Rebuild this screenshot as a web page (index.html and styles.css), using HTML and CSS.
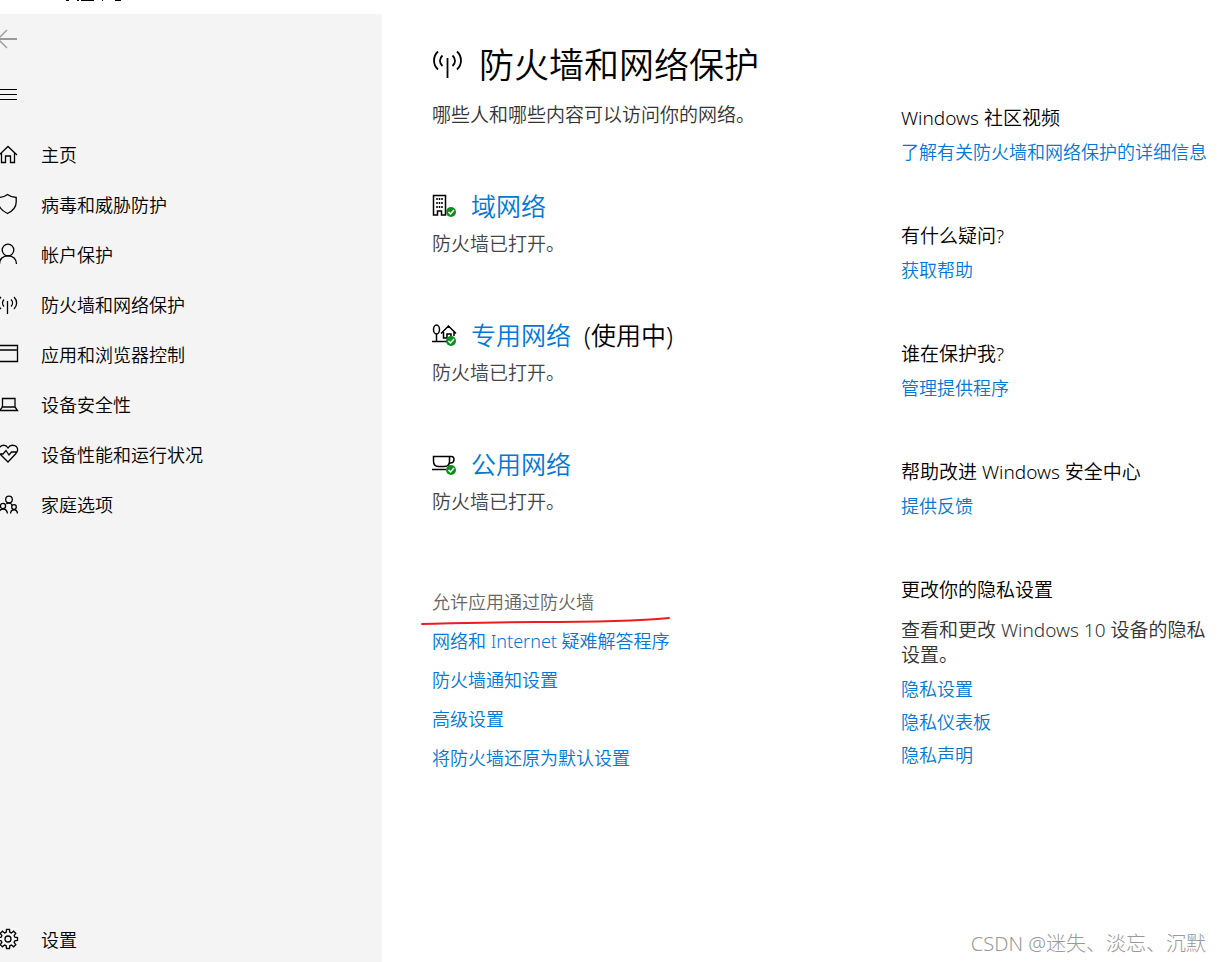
FILE: index.html
```html
<!DOCTYPE html>
<html lang="zh-CN">
<head>
<meta charset="utf-8">
<meta name="viewport" content="width=device-width, initial-scale=1">
<title>防火墙和网络保护</title>
<link rel="stylesheet" href="styles.css">
</head>
<body>
<div class="window">
  <header class="titlebar">
    <svg class="titlebar-marks" width="60" height="2" viewBox="0 0 60 2" aria-hidden="true"><path d="M0 .5h3M11 .5h2M15 .5h13M36 .5h1M49 .5h6"/></svg>
  </header>
  <div class="layout">
    <aside class="sidebar">
      <button class="icon-button back" type="button" aria-label="返回">
        <svg class="icon" viewBox="0 0 20 24"><path d="M0 11h17" stroke-width="2"/><path d="M7 2-2 11l9 9"/></svg>
      </button>
      <button class="icon-button menu" type="button" aria-label="菜单">
        <svg class="icon" viewBox="0 0 20 24"><path d="M0 7.500h17M0 12.500h17M0 17.500h17"/></svg>
      </button>
      <nav class="nav">
        <a class="nav-item" href="#"><svg class="icon" viewBox="0 0 20 24"><path d="M-1 12 8 3.500l9 8.500M1.500 10v9.500h4V13h5v6.500h4V10"/></svg>主页</a>
        <a class="nav-item" href="#"><svg class="icon" viewBox="0 0 20 24"><path d="M7.500 1.500C4.500 3.800 2 4.500-1.500 4.500V9c0 5 4 9 9 11.500 5-2.500 8.700-6.500 8.700-11.500V4.500C13 4.500 10.500 3.800 7.500 1.500z"/></svg>病毒和威胁防护</a>
        <a class="nav-item" href="#"><svg class="icon" viewBox="0 0 20 24"><circle cx="8" cy="7" r="5.800"/><path d="M-.5 21c0-5 3.500-8.200 8.500-8.200s8.500 3.200 8.500 8.200"/></svg>帐户保护</a>
        <a class="nav-item" href="#"><svg class="icon" viewBox="0 0 20 24"><path d="M7.500 8v13M4 6.500c-2 2-2 5 0 7M11 6.500c2 2 2 5 0 7M1 4c-3.500 3.500-3.500 8.500 0 12M14 4c3.500 3.500 3.500 8.500 0 12"/></svg>防火墙和网络保护</a>
        <a class="nav-item" href="#"><svg class="icon" viewBox="0 0 20 24"><path d="M-1 2.500h18.500v16H-1M-1 7h18"/></svg>应用和浏览器控制</a>
        <a class="nav-item" href="#"><svg class="icon" viewBox="0 0 20 24"><path d="M2.500 14V5.500h12.500V14l2.500 3.500H-.5zM1.500 14h14"/></svg>设备安全性</a>
        <a class="nav-item" href="#"><svg class="icon" viewBox="0 0 20 24"><path d="M-1 9C-2.500 2.500 5 0 8 5c3-5 12-2.500 9 4l-1.500 2L8 19 0 11h3l3-3.500L9 12l2.500-3h5"/></svg>设备性能和运行状况</a>
        <a class="nav-item" href="#"><svg class="icon" viewBox="0 0 20 24"><circle cx="9" cy="6.500" r="3.300"/><circle cx="3" cy="13" r="2.600"/><circle cx="14" cy="14" r="2.300"/><path d="M-1.500 20.500c1-6 8-6 9 0M10.500 20.500c.6-5 6.400-5 7 0M6.500 11c1-1.500 5-1.500 5.500 1.500"/></svg>家庭选项</a>
      </nav>
      <a class="nav-item nav-settings" href="#"><svg class="icon" viewBox="0 0 20 24"><circle cx="8" cy="11" r="3"/><path d="m6.200 4.200.3-2.700h3l.3 2.700 1.600.7 2.200-1.700 2.200 2.200-1.700 2.200.7 1.600 2.700.3v3l-2.700.3-.7 1.600 1.700 2.200-2.200 2.200-2.200-1.700-1.600.7-.3 2.700h-3l-.3-2.700-1.600-.7-2.200 1.700L.2 16.600l1.700-2.200-.7-1.600-2.700-.3v-3l2.700-.3.700-1.600L.2 5.400l2.200-2.200 2.200 1.700z"/></svg>设置</a>
    </aside>

    <main class="main">
      <h1 class="page-title">
        <svg class="title-icon" viewBox="0 0 32 32" aria-hidden="true"><path d="M15.500 9v20M10.500 6.500c-3.400 3-3.400 7.500 0 10.500M20.500 6.500c3.400 3 3.400 7.500 0 10.500M6 2.500c-5.300 5-5.300 13 0 18M25 2.500c5.300 5 5.300 13 0 18"/></svg>
        防火墙和网络保护
      </h1>
      <p class="subtitle">哪些人和哪些内容可以访问你的网络。</p>

      <section class="network">
        <h2 class="network-title">
          <svg class="network-icon" viewBox="0 0 26 26" aria-hidden="true"><path d="M1.500 22V2.500h12V22h-4v-4h-4v4z"/><path d="M5 5v10M7.500 5v10M10 5v10" stroke-dasharray="2 2"/><circle class="ok" cx="19" cy="19" r="5"/><path class="tick" d="m16.500 19 2 2 3.500-4"/></svg>
          <a class="link" href="#">域网络</a>
        </h2>
        <p class="status">防火墙已打开。</p>
      </section>
      <section class="network">
        <h2 class="network-title">
          <svg class="network-icon" viewBox="0 0 26 26" aria-hidden="true"><ellipse cx="4.500" cy="7.500" rx="3" ry="4.500"/><path d="M4.500 12v7M0 19.500h16M9 11.500 16.500 4l7.500 7.500M11.500 10v6H15v-4h4v3M22 10v4"/><circle class="ok" cx="19" cy="19" r="5"/><path class="tick" d="m16.500 19 2 2 3.500-4"/></svg>
          <a class="link" href="#">专用网络</a>
          <span class="in-use">(使用中)</span>
        </h2>
        <p class="status">防火墙已打开。</p>
      </section>
      <section class="network">
        <h2 class="network-title">
          <svg class="network-icon" viewBox="0 0 26 26" aria-hidden="true"><path d="M1.500 5.500V10c0 3.500 2 5.500 5 5.500h6c3 0 5-2 5-5.500V5.500zM17.500 5.500h2c3.500 0 3.500 6.500-1 6.500h-1.500M0 18.500h14"/><circle class="ok" cx="19" cy="19" r="5"/><path class="tick" d="m16.500 19 2 2 3.500-4"/></svg>
          <a class="link" href="#">公用网络</a>
        </h2>
        <p class="status">防火墙已打开。</p>
      </section>

      <ul class="actions">
        <li class="marked"><a class="link visited" href="#">允许应用通过防火墙</a>
          <svg class="underline" viewBox="0 0 250 10" aria-hidden="true"><path d="M1 8c45-1 75-2 115-2s90 0 132-4"/></svg></li>
        <li><a class="link" href="#">网络和 Internet 疑难解答程序</a></li>
        <li><a class="link" href="#">防火墙通知设置</a></li>
        <li><a class="link" href="#">高级设置</a></li>
        <li><a class="link" href="#">将防火墙还原为默认设置</a></li>
      </ul>
    </main>

    <aside class="help">
      <section class="help-group"><h3>Windows 社区视频</h3><a class="link" href="#">了解有关防火墙和网络保护的详细信息</a></section>
      <section class="help-group"><h3>有什么疑问?</h3><a class="link" href="#">获取帮助</a></section>
      <section class="help-group"><h3>谁在保护我?</h3><a class="link" href="#">管理提供程序</a></section>
      <section class="help-group"><h3>帮助改进 Windows 安全中心</h3><a class="link" href="#">提供反馈</a></section>
      <section class="help-group">
        <h3>更改你的隐私设置</h3>
        <p class="help-text">查看和更改 Windows 10 设备的隐私设置。</p>
        <div class="help-links">
          <a class="link" href="#">隐私设置</a>
          <a class="link" href="#">隐私仪表板</a>
          <a class="link" href="#">隐私声明</a>
        </div>
      </section>
    </aside>
  </div>
  <div class="watermark">CSDN @迷失、淡忘、沉默</div>
</div>
</body>
</html>
```

FILE: styles.css
```css
* { box-sizing: border-box; }

body {
  margin: 0;
  background: #fff;
  color: #000;
  font-family: "Noto Sans", "Noto Sans CJK SC", sans-serif;
  font-size: 18px;
  font-weight: 350;
  line-height: 26px;
}

h1, h2, h3, p, ul { margin: 0; padding: 0; font-weight: 350; }
ul { list-style: none; }
svg { fill: none; stroke: currentColor; flex: none; }

.window {
  position: relative;
  display: flex;
  flex-direction: column;
  min-height: 100vh;
}

.titlebar { height: 14px; padding-left: 66px; }
.titlebar-marks { display: block; }

.layout {
  flex: 1;
  display: grid;
  grid-template-columns: 382px minmax(0, 1fr) 320px;
}

/* Navigation */
.sidebar {
  display: flex;
  flex-direction: column;
  background: #f4f4f4;
}
.icon { width: 20px; height: 24px; stroke-width: 1.3; }
.icon-button {
  display: flex;
  align-items: center;
  width: 48px;
  height: 52px;
  padding: 0;
  border: 0;
  background: none;
  color: #000;
}
.back { color: #999; }
.menu { height: 56px; margin-bottom: 8px; }
.menu .icon { stroke-width: 1; }
.nav-item {
  display: flex;
  align-items: center;
  gap: 21px;
  height: 50px;
  color: #000;
  text-decoration: none;
}
.nav-settings { height: 44px; margin-top: auto; }

/* Main column */
.main { padding: 28px 0 40px 50px; }
.page-title {
  display: flex;
  align-items: center;
  gap: 15px;
  font-size: 35px;
  line-height: 46px;
}
.title-icon { width: 32px; height: 32px; stroke-width: 1.8; }
.subtitle { margin: 14px 0 59px; font-size: 19px; color: #333; }
.network { margin-bottom: 59px; }
.network-title {
  display: flex;
  align-items: center;
  gap: 13px;
  font-size: 25px;
  line-height: 38px;
}
.network-icon { width: 26px; height: 26px; stroke-width: 1.5; }
.ok { fill: #0a8f1e; stroke: none; }
.tick { stroke: #fff; }
.status { margin-top: 6px; font-size: 19px; color: #444; }
.link { color: #0078d7; text-decoration: none; }
.visited { color: #666; }

.actions { display: grid; gap: 13px; margin-top: 74px; }
.marked { position: relative; }
.underline {
  position: absolute;
  left: -11px;
  top: 27px;
  width: 250px;
  height: 10px;
  stroke: #ed1c24;
  stroke-width: 2;
  stroke-linecap: round;
}

/* Help column */
.help { padding: 91px 8px 40px 0; }
.help-group {
  display: flex;
  flex-direction: column;
  align-items: flex-start;
  gap: 8px;
  margin-bottom: 58px;
}
.help-group h3, .help-text { font-size: 19px; }
.help-text { margin: 7px 0 0; line-height: 25px; color: #333; }
.help-links { display: grid; gap: 7px; }

.watermark {
  position: absolute;
  right: 15px;
  bottom: 5px;
  color: #999;
  font-size: 20px;
  font-weight: 300;
}
```
